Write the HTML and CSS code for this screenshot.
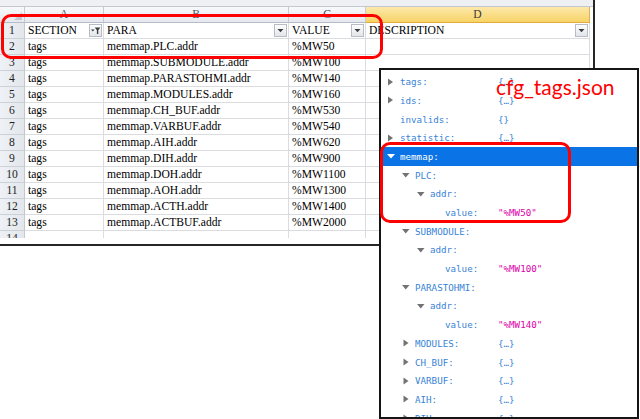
FILE: index.html
```html
<!DOCTYPE html>
<html>
<head>
<meta charset="utf-8">
<link rel="stylesheet" href="styles.css">
</head>
<body>
<div class="sheet">
  <div class="topbar"></div>
  <div class="grid">
    <div class="cell corner"><svg class="corner-tri" viewBox="0 0 8 8"><path d="M8 0 L8 8 L0 8Z"/></svg></div>
    <div class="cell colhead">A</div>
    <div class="cell colhead">B</div>
    <div class="cell colhead">C</div>
    <div class="cell colhead sel">D</div>

    <div class="cell rowhead">1</div>
    <div class="cell">SECTION<span class="filter"><svg viewBox="0 0 11 11"><path d="M1 4.5 H4.6 L2.8 6.6Z"/><path d="M4.8 2.5 H10.4 L8.3 5.2 V9 H6.9 V5.2Z"/></svg></span></div>
    <div class="cell">PARA<span class="filter"><svg viewBox="0 0 11 11"><path d="M2.5 4 H8.5 L5.5 7.2Z"/></svg></span></div>
    <div class="cell">VALUE<span class="filter"><svg viewBox="0 0 11 11"><path d="M2.5 4 H8.5 L5.5 7.2Z"/></svg></span></div>
    <div class="cell">DESCRIPTION<span class="filter"><svg viewBox="0 0 11 11"><path d="M2.5 4 H8.5 L5.5 7.2Z"/></svg></span></div>

    <div class="cell rowhead">2</div><div class="cell">tags</div><div class="cell">memmap.PLC.addr</div><div class="cell">%MW50</div><div class="cell"></div>
    <div class="cell rowhead">3</div><div class="cell">tags</div><div class="cell">memmap.SUBMODULE.addr</div><div class="cell">%MW100</div><div class="cell"></div>
    <div class="cell rowhead">4</div><div class="cell">tags</div><div class="cell">memmap.PARASTOHMI.addr</div><div class="cell">%MW140</div><div class="cell"></div>
    <div class="cell rowhead">5</div><div class="cell">tags</div><div class="cell">memmap.MODULES.addr</div><div class="cell">%MW160</div><div class="cell"></div>
    <div class="cell rowhead">6</div><div class="cell">tags</div><div class="cell">memmap.CH_BUF.addr</div><div class="cell">%MW530</div><div class="cell"></div>
    <div class="cell rowhead">7</div><div class="cell">tags</div><div class="cell">memmap.VARBUF.addr</div><div class="cell">%MW540</div><div class="cell"></div>
    <div class="cell rowhead">8</div><div class="cell">tags</div><div class="cell">memmap.AIH.addr</div><div class="cell">%MW620</div><div class="cell"></div>
    <div class="cell rowhead">9</div><div class="cell">tags</div><div class="cell">memmap.DIH.addr</div><div class="cell">%MW900</div><div class="cell"></div>
    <div class="cell rowhead">10</div><div class="cell">tags</div><div class="cell">memmap.DOH.addr</div><div class="cell">%MW1100</div><div class="cell"></div>
    <div class="cell rowhead">11</div><div class="cell">tags</div><div class="cell">memmap.AOH.addr</div><div class="cell">%MW1300</div><div class="cell"></div>
    <div class="cell rowhead">12</div><div class="cell">tags</div><div class="cell">memmap.ACTH.addr</div><div class="cell">%MW1400</div><div class="cell"></div>
    <div class="cell rowhead">13</div><div class="cell">tags</div><div class="cell">memmap.ACTBUF.addr</div><div class="cell">%MW2000</div><div class="cell"></div>
    <div class="cell rowhead">14</div><div class="cell"></div><div class="cell"></div><div class="cell"></div><div class="cell"></div>
  </div>
</div>

<div class="json">
  <div class="row l0"><span class="key"><svg class="tog" viewBox="0 0 16 10"><path d="M4 1.5 L9 5 L4 8.5Z"/></svg>tags:</span><span class="val">{…}</span></div>
  <div class="row l0"><span class="key"><svg class="tog" viewBox="0 0 16 10"><path d="M4 1.5 L9 5 L4 8.5Z"/></svg>ids:</span><span class="val">{…}</span></div>
  <div class="row l0"><span class="key"><span class="tog"></span>invalids:</span><span class="val">{}</span></div>
  <div class="row l0"><span class="key"><svg class="tog" viewBox="0 0 16 10"><path d="M4 1.5 L9 5 L4 8.5Z"/></svg>statistic:</span><span class="val">{…}</span></div>
  <div class="row l0 sel"><span class="key"><svg class="tog" viewBox="0 0 16 10"><path d="M3 3 H11 L7 7.5Z"/></svg>memmap:</span><span class="val"></span></div>
  <div class="row l1"><span class="key"><svg class="tog" viewBox="0 0 16 10"><path d="M3 3 H10.5 L6.75 7.5Z"/></svg>PLC:</span><span class="val"></span></div>
  <div class="row l2"><span class="key"><svg class="tog" viewBox="0 0 16 10"><path d="M3 3 H10.5 L6.75 7.5Z"/></svg>addr:</span><span class="val"></span></div>
  <div class="row l3"><span class="key"><span class="tog"></span>value:</span><span class="str">"%MW50"</span></div>
  <div class="row l1"><span class="key"><svg class="tog" viewBox="0 0 16 10"><path d="M3 3 H10.5 L6.75 7.5Z"/></svg>SUBMODULE:</span><span class="val"></span></div>
  <div class="row l2"><span class="key"><svg class="tog" viewBox="0 0 16 10"><path d="M3 3 H10.5 L6.75 7.5Z"/></svg>addr:</span><span class="val"></span></div>
  <div class="row l3"><span class="key"><span class="tog"></span>value:</span><span class="str">"%MW100"</span></div>
  <div class="row l1"><span class="key"><svg class="tog" viewBox="0 0 16 10"><path d="M3 3 H10.5 L6.75 7.5Z"/></svg>PARASTOHMI:</span><span class="val"></span></div>
  <div class="row l2"><span class="key"><svg class="tog" viewBox="0 0 16 10"><path d="M3 3 H10.5 L6.75 7.5Z"/></svg>addr:</span><span class="val"></span></div>
  <div class="row l3"><span class="key"><span class="tog"></span>value:</span><span class="str">"%MW140"</span></div>
  <div class="row l1"><span class="key"><svg class="tog" viewBox="0 0 16 10"><path d="M4.5 1.5 L9.5 5 L4.5 8.5Z"/></svg>MODULES:</span><span class="val">{…}</span></div>
  <div class="row l1"><span class="key"><svg class="tog" viewBox="0 0 16 10"><path d="M4.5 1.5 L9.5 5 L4.5 8.5Z"/></svg>CH_BUF:</span><span class="val">{…}</span></div>
  <div class="row l1"><span class="key"><svg class="tog" viewBox="0 0 16 10"><path d="M4.5 1.5 L9.5 5 L4.5 8.5Z"/></svg>VARBUF:</span><span class="val">{…}</span></div>
  <div class="row l1"><span class="key"><svg class="tog" viewBox="0 0 16 10"><path d="M4.5 1.5 L9.5 5 L4.5 8.5Z"/></svg>AIH:</span><span class="val">{…}</span></div>
  <div class="row l1"><span class="key"><svg class="tog" viewBox="0 0 16 10"><path d="M4.5 1.5 L9.5 5 L4.5 8.5Z"/></svg>DIH:</span><span class="val">{…}</span></div>
</div>

<div class="mark mark-sheet"></div>
<div class="mark mark-json"></div>
<div class="label">cfg_tags.json</div>
</body>
</html>
```

FILE: styles.css
```css
* { box-sizing: border-box; }
html, body { margin: 0; padding: 0; }
body {
  width: 640px;
  height: 419px;
  overflow: hidden;
  background: #fff;
  position: relative;
  font-family: "Liberation Serif", "Times New Roman", serif;
}

/* spreadsheet */
.sheet {
  width: 595px;
  height: 246px;
  border-right: 2px solid #262626;
  border-bottom: 2px solid #262626;
  display: flex;
  flex-direction: column;
  background: #fff;
}
.topbar {
  flex: none;
  height: 7px;
  background: #eef0f3;
  border-bottom: 1px solid #c3c8cf;
}
.grid {
  flex: none;
  width: 590px;
  height: 231px;
  overflow: hidden;
  display: grid;
  grid-template-columns: 25px 79px 185px 77px 224px;
  grid-auto-rows: 16px;
}
.cell {
  border-right: 1px solid #dadcdf;
  border-bottom: 1px solid #dadcdf;
  font-size: 11.6px;
  line-height: 15px;
  padding: 0 1px 0 3px;
  white-space: nowrap;
  overflow: hidden;
  display: flex;
  align-items: center;
  color: #000;
}
.colhead {
  background: linear-gradient(#f8f9fb, #e5e8ed);
  border-right-color: #c6cbd2;
  border-bottom-color: #b6bcc5;
  justify-content: center;
  padding: 0;
  color: #4a5769;
}
.colhead.sel {
  background: linear-gradient(#fde9ab, #f7d266);
  border-bottom-color: #e3aa3c;
  border-right-color: #d9b25c;
  color: #3a3a3a;
}
.corner {
  background: linear-gradient(#f8f9fb, #e5e8ed);
  border-right-color: #c6cbd2;
  border-bottom-color: #b6bcc5;
  padding: 0;
  justify-content: flex-end;
  align-items: flex-end;
}
.corner-tri {
  width: 8px;
  height: 8px;
  margin: 0 2px 2px 0;
  fill: #c3c8cf;
}
.rowhead {
  background: linear-gradient(90deg, #eef1f5, #e3e7ec);
  border-right-color: #c3c9d0;
  border-bottom-color: #ccd1d8;
  justify-content: center;
  padding: 0;
  color: #1e1e1e;
}
.filter {
  margin-left: auto;
  flex: none;
  width: 13px;
  height: 13px;
  border: 1px solid #b8bdc5;
  background: linear-gradient(#fefefe, #e2e5e9);
  display: flex;
  align-items: center;
  justify-content: center;
}
.filter svg {
  width: 11px;
  height: 11px;
  fill: #3c3c3c;
}

/* json viewer window */
.json {
  position: absolute;
  left: 379px;
  top: 68px;
  width: 260px;
  height: 351px;
  border: 2px solid #151515;
  background: #fff;
  overflow: hidden;
  padding-top: 2.4px;
  font-family: "DejaVu Sans Mono", "Liberation Mono", monospace;
  font-size: 9.2px;
}
.row {
  height: 18.7px;
  display: grid;
  grid-template-columns: 117px 1fr;
  align-items: center;
  white-space: nowrap;
}
.key {
  display: flex;
  align-items: center;
  color: #3883d6;
  padding-left: 3px;
}
.l1 .key { padding-left: 18px; }
.l2 .key { padding-left: 33px; }
.l3 .key { padding-left: 48px; }
.tog {
  flex: none;
  width: 16px;
  height: 10px;
  fill: #737373;
}
.val { color: #3883d6; }
.str { color: #dd00a9; }
.row.sel { background: #0a74e6; }
.row.sel .key { color: #fff; }
.row.sel .tog { fill: #fff; }

/* annotations */
.mark {
  position: absolute;
  border: 3px solid #ff0000;
  border-radius: 10px;
}
.mark-sheet {
  left: 1px;
  top: 14px;
  width: 382px;
  height: 45px;
}
.mark-json {
  left: 380px;
  top: 142px;
  width: 191px;
  height: 81px;
}
.label {
  position: absolute;
  left: 496px;
  top: 76px;
  font-family: Lato, "Open Sans", sans-serif;
  font-size: 21px;
  line-height: 21px;
  color: #ff0000;
}
```
